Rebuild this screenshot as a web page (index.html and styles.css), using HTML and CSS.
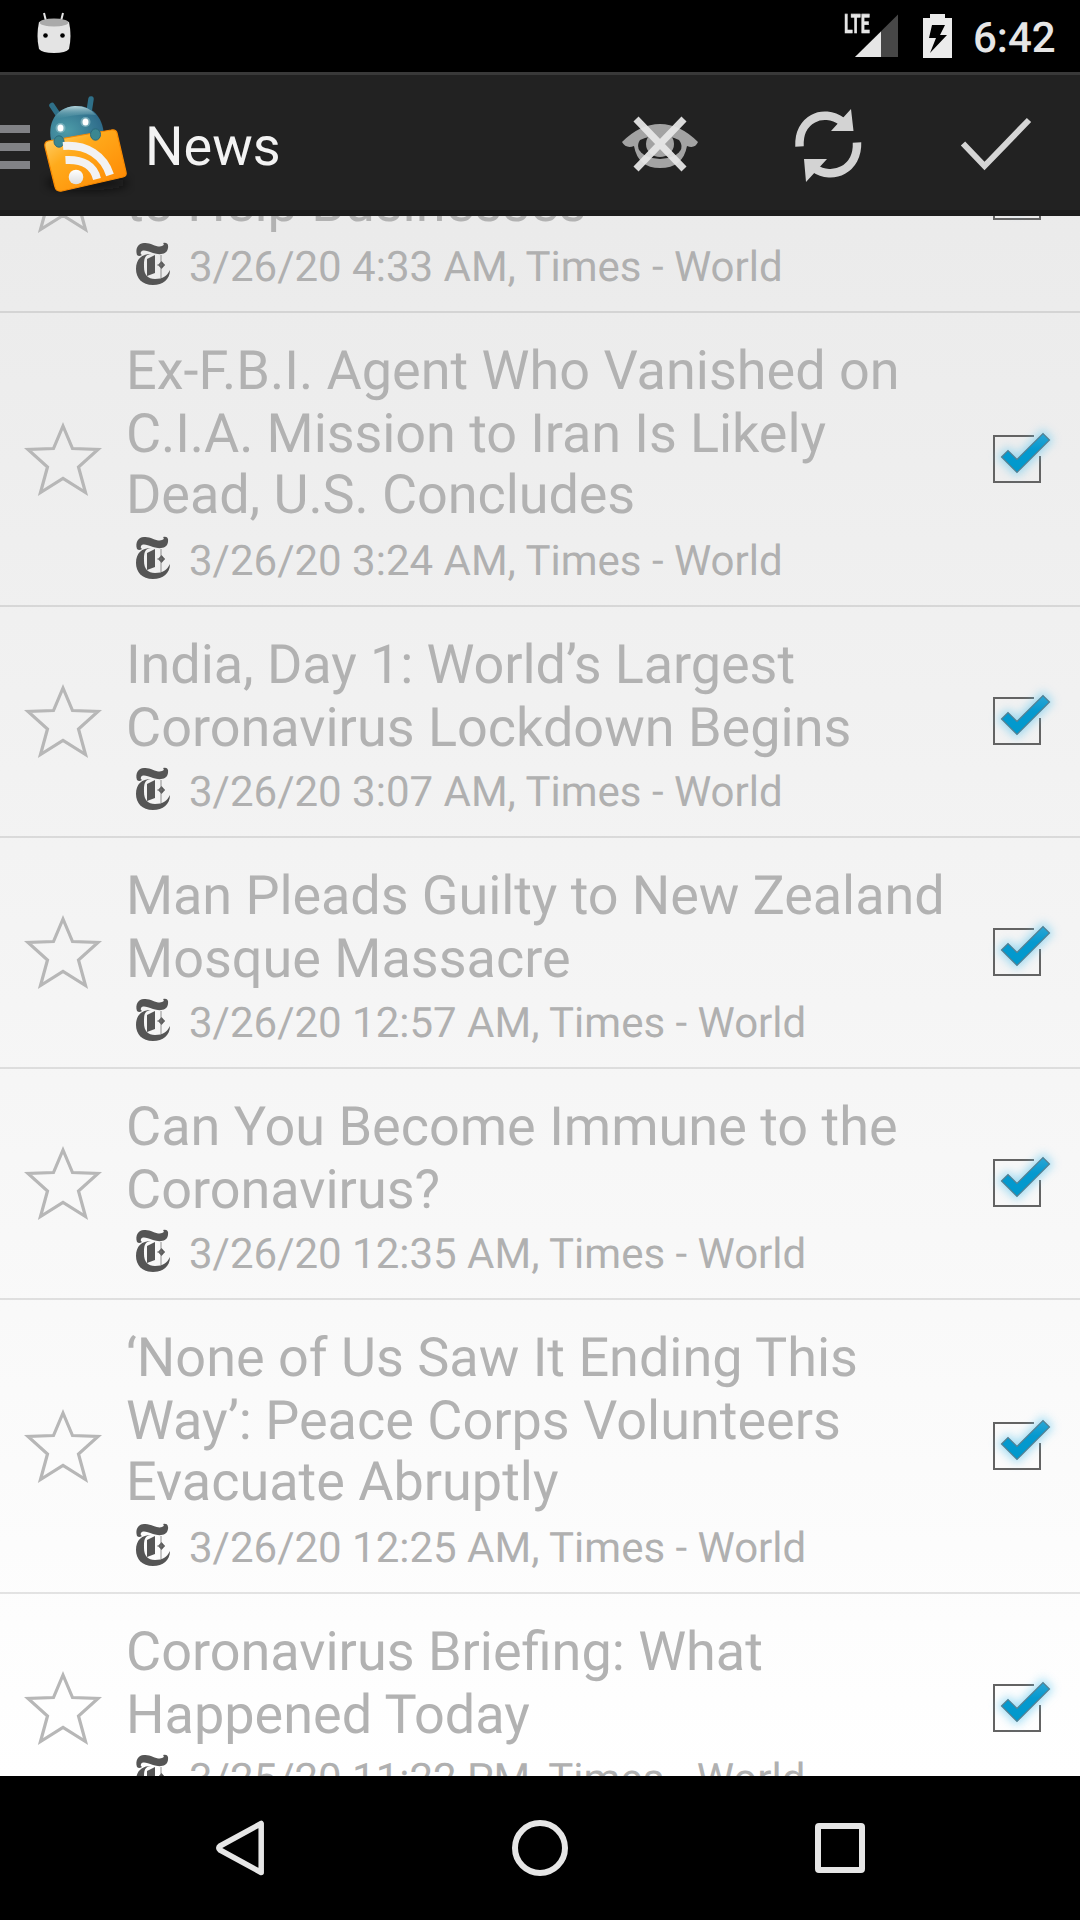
FILE: index.html
```html
<!DOCTYPE html>
<html lang="en">
<head>
<meta charset="utf-8">
<title>News</title>
<link rel="stylesheet" href="styles.css">
</head>
<body>
<svg class="defs" width="0" height="0" aria-hidden="true">
  <defs>
    <linearGradient id="tick" x1="0" y1="0" x2="0" y2="1"><stop offset="0" stop-color="#2ba5d4"/><stop offset=".4" stop-color="#0599cf"/><stop offset="1" stop-color="#0099cc"/></linearGradient>
    <filter id="glow" x="-50%" y="-50%" width="200%" height="200%"><feGaussianBlur stdDeviation="5"/></filter>
    <filter id="soft" x="-10%" y="-10%" width="120%" height="120%"><feGaussianBlur stdDeviation=".5"/></filter>
    <symbol id="star" viewBox="0 0 84 84"><path d="M42 9 51.500 31.500 77 32.500 57.500 50 64.500 75.500 42 61.500 19.500 75.500 26.500 50 7 32.500 32.500 31.500Z" transform="translate(0 -1)" fill="none" stroke="#b7b7b7" stroke-width="3.200" filter="url(#soft)"/></symbol>
    <symbol id="check" viewBox="0 0 96 96">
      <path d="M64 25H24V71H70V45" fill="none" stroke="#636363" stroke-width="2"/>
      <path d="M31 46 38 39.500 47 48 73 22 79.500 29 47 61.500Z" fill="#4db9e4" stroke="#6ccbf0" stroke-width="6" opacity=".6" filter="url(#glow)"/>
      <path d="M31.500 46 38 39.500 47 48.500 73 22.500 79.500 29 47 61.500Z" fill="url(#tick)" stroke="#547f91" stroke-width="1.200"/>
    </symbol>
    <symbol id="feed" viewBox="0 0 36 44">
      <path d="M2 13C0 7 3 1 9 1C15 0 22 6 27 4Q30 3 28 1Q34 0 33 6C32 13 24 13 18 11C12 9 8 7 6 10Q5 12 7 13Q4 15 2 13Z" fill="#555"/>
      <path d="M16 12C9 13 9 17 9 25C9 33 13 37 20 37C28 37 32 34 35 28C35 37 28 43 18 43C7 43 1 36 1 27C1 17 7 12 16 12Z" fill="#555"/>
      <path d="M12 17 20 13V31L12 34ZM23 23 26.500 19 30 23 26.500 27Z" fill="#555"/>
      <path d="M26 13V36M22 23H30" stroke="#777" stroke-width=".8" fill="none"/>
    </symbol>
  </defs>
</svg>
<div class="screen">
  <div class="status">
    <svg class="droid" width="36" height="42" viewBox="0 0 36 42"><path d="M8 1 10 9M27 1 25 9" stroke="#e4e4e4" stroke-width="2"/><path d="M3 10Q18 5 33 10Q36 24 33 37Q30 41 18 41Q6 41 3 37Q0 24 3 10Z" fill="#e4e4e4"/><ellipse cx="18" cy="10.500" rx="14.500" ry="4" fill="#aaa"/><circle cx="9.500" cy="23.500" r="2.300"/><circle cx="26.500" cy="23.500" r="2.300"/></svg>
    <div class="signal"><span class="lte">LTE</span><svg width="54" height="44" viewBox="0 0 54 44"><path d="M11 43 54 .5V43Z" fill="#474747"/><path d="M11 43 37 17.500V43Z" fill="#e6e6e6"/></svg></div>
    <svg class="battery" width="29" height="44" viewBox="0 0 29 44"><path d="M0 4H7V0H22V4H29V44H0Z" fill="#ebebeb"/><path d="M9 11H22L17 21H24L7 39 13 24H6Z"/></svg>
    <span class="clock">6:42</span>
  </div>
  <header class="bar">
    <div class="menu"><i></i><i></i><i></i></div>
    <svg class="logo" width="96" height="108" viewBox="0 0 96 108">
      <defs>
        <linearGradient id="card" x1="0" y1="0" x2="1" y2="1"><stop offset="0" stop-color="#ffd87a"/><stop offset=".35" stop-color="#ffab1c"/><stop offset="1" stop-color="#ff8500"/></linearGradient>
        <radialGradient id="head" cx=".3" cy=".6" r=".75"><stop offset="0" stop-color="#4d9ca8"/><stop offset="1" stop-color="#2b6687"/></radialGradient>
        <linearGradient id="shine" x1="0" y1="0" x2="0" y2="1"><stop offset="0" stop-color="#b8d4da"/><stop offset="1" stop-color="#4b94a2" stop-opacity="0"/></linearGradient>
        <linearGradient id="paper" x1="0" y1="0" x2="0" y2="1"><stop offset="0" stop-color="#fff"/><stop offset="1" stop-color="#dedede"/></linearGradient>
      </defs>
      <ellipse cx="48" cy="93" rx="41" ry="7" fill="#111" opacity=".7" filter="url(#glow)"/>
      <path d="M13 15.500 20 26M52 9 50 22" stroke="#2f7089" stroke-width="5.500" stroke-linecap="round"/>
      <path d="M14 57C7 38 13 18 36 16C55 15 65 29 65 48Z" fill="url(#head)"/>
      <path d="M14 30Q21 17 36 16Q50 16 57 25Q40 23 14 30Z" fill="url(#shine)"/>
      <path d="M10 52 73 41Q78 40 79 44L88 83Q89 87 85 88L24 102Q18 103 17 98L7 58Q6 53 10 52Z" transform="translate(-1 -1)" fill="url(#card)" stroke="#f88900" stroke-width="1.200"/>
      <circle cx="21.500" cy="38" r="5" fill="#98c4cd" opacity=".6"/><circle cx="46.500" cy="32" r="5" fill="#98c4cd" opacity=".6"/>
      <ellipse cx="21.500" cy="38" rx="3" ry="3.600" fill="#fff"/><ellipse cx="46.500" cy="32" rx="3" ry="3.600" fill="#fff"/>
      <g fill="#3b8791" stroke="#2b6a7d"><ellipse cx="20" cy="51.500" rx="5" ry="5.700"/><ellipse cx="56.500" cy="44.500" rx="5" ry="5.700"/></g>
      <circle cx="37" cy="87" r="7.300" fill="url(#paper)"/>
      <path d="M26.500 71C44 70 55 77 58 90M24 57C48 55 65 67 71 86" transform="translate(0 -1)" fill="none" stroke="#f2f2f2" stroke-width="8"/>
    </svg>
    <h1>News</h1>
    <div class="actions">
      <svg width="96" height="96" viewBox="0 0 96 96"><path d="M10 45Q28 27 48 27Q68 27 86 45Q83 52 75 49Q71 71 48 71Q26 71 22 49Q14 52 10 45Z" fill="#a3a3a3"/><path d="M28 43Q22 52 34 59Q48 65 62 59Q74 52 67 43Q48 34 28 43Z" fill="#222"/><ellipse cx="48" cy="47" rx="14" ry="13" fill="#a3a3a3"/><path d="M24 22 72 72M72 22 24 72" stroke="#e8e8e8" stroke-width="7" opacity=".93"/></svg>
      <svg width="96" height="96" viewBox="0 0 96 96"><path d="M19.500 49.500C18 22 43 11 62 24.500M77 45.500C78 72 53 84 34 71" fill="none" stroke="#d3d3d3" stroke-width="8.500"/><path d="M71 12 73.500 34H51ZM24 62H47L26 85Z" fill="#d3d3d3"/></svg>
      <svg width="96" height="96" viewBox="0 0 96 96"><path d="M15 46.500 36.500 69 81 23" fill="none" stroke="#d5d5d5" stroke-width="6"/></svg>
    </div>
  </header>
  <main class="list">
    <article class="row cut"><svg class="star"><use href="#star"/></svg><div class="text"><h2><span>to Help Businesses</span></h2><p><svg class="feed"><use href="#feed"/></svg>3/26/20 4:33 AM, Times - World</p></div><svg class="check"><use href="#check"/></svg></article>
    <article class="row"><svg class="star"><use href="#star"/></svg><div class="text"><h2><span>Ex-F.B.I. Agent Who Vanished on</span><span class="snug">C.I.A. Mission to Iran Is Likely</span><span class="snug">Dead, U.S. Concludes</span></h2><p><svg class="feed"><use href="#feed"/></svg>3/26/20 3:24 AM, Times - World</p></div><svg class="check"><use href="#check"/></svg></article>
    <article class="row"><svg class="star"><use href="#star"/></svg><div class="text"><h2><span class="snug">India, Day 1: World’s Largest</span><span>Coronavirus Lockdown Begins</span></h2><p><svg class="feed"><use href="#feed"/></svg>3/26/20 3:07 AM, Times - World</p></div><svg class="check"><use href="#check"/></svg></article>
    <article class="row"><svg class="star"><use href="#star"/></svg><div class="text"><h2><span class="snug">Man Pleads Guilty to New Zealand</span><span>Mosque Massacre</span></h2><p><svg class="feed"><use href="#feed"/></svg>3/26/20 12:57 AM, Times - World</p></div><svg class="check"><use href="#check"/></svg></article>
    <article class="row"><svg class="star"><use href="#star"/></svg><div class="text"><h2><span>Can You Become Immune to the</span><span>Coronavirus?</span></h2><p><svg class="feed"><use href="#feed"/></svg>3/26/20 12:35 AM, Times - World</p></div><svg class="check"><use href="#check"/></svg></article>
    <article class="row"><svg class="star"><use href="#star"/></svg><div class="text"><h2><span>‘None of Us Saw It Ending This</span><span>Way’: Peace Corps Volunteers</span><span>Evacuate Abruptly</span></h2><p><svg class="feed"><use href="#feed"/></svg>3/26/20 12:25 AM, Times - World</p></div><svg class="check"><use href="#check"/></svg></article>
    <article class="row"><svg class="star"><use href="#star"/></svg><div class="text"><h2><span>Coronavirus Briefing: What</span><span>Happened Today</span></h2><p><svg class="feed"><use href="#feed"/></svg>3/25/20 11:22 PM, Times - World</p></div><svg class="check"><use href="#check"/></svg></article>
  </main>
  <nav class="nav">
    <svg width="60" height="60" viewBox="0 0 60 60"><path d="M51.200 5.500V54.500L10 32Q7.500 30 10 28Z" fill="none" stroke="#e6e6e6" stroke-width="5.500" stroke-linejoin="round"/></svg>
    <svg width="60" height="60" viewBox="0 0 60 60"><circle cx="30" cy="30" r="25" fill="none" stroke="#e6e6e6" stroke-width="6"/></svg>
    <svg width="60" height="60" viewBox="0 0 60 60"><rect x="8" y="8" width="44" height="44" rx="1" fill="none" stroke="#e6e6e6" stroke-width="6"/></svg>
  </nav>
</div>
</body>
</html>
```
FILE: styles.css
```css
* { box-sizing: border-box; margin: 0; padding: 0; }
body { font-family: Roboto, sans-serif; background: #000; text-rendering: geometricPrecision; }
svg { display: block; flex: none; }
.defs { position: absolute; }
.screen { width: 1080px; height: 1920px; overflow: hidden; display: flex; flex-direction: column; }
.status { height: 72px; flex: none; display: flex; align-items: flex-start; background: #000; }
.droid { margin: 12px 0 0 36px; }
.signal { margin: 14px 25px 0 auto; width: 54px; position: relative; }
.lte { position: absolute; left: 0; top: 0; font-size: 26.500px; line-height: 22px; font-weight: 700; color: #e6e6e6; -webkit-text-stroke: .6px #e6e6e6; transform: scaleX(.6); transform-origin: left; }
.battery { margin: 14px 21px 0 0; }
.clock { width: 107px; font-size: 42px; line-height: 50px; padding-top: 14px; font-weight: 500; color: #e6e6e6; }
.bar { height: 144px; flex: none; display: flex; align-items: center; background: #222; border-top: 3px solid #393939; border-bottom: 6px solid #1b1b1b; }
.menu { width: 30px; display: flex; flex-direction: column; gap: 10px; margin-top: 8px; }
.menu i { height: 8px; background: #818286; }
.logo { margin: 2px 0 0 9px; }
.bar h1 { margin-left: 10px; font-size: 54px; font-weight: 400; line-height: 64px; color: #f3f3f3; padding-top: 10px; }
.actions { margin: 5px 36px 0 auto; display: flex; gap: 72px; }
.list { height: 1560px; flex: none; overflow: hidden; display: flex; flex-direction: column; background: linear-gradient(#e8e8e8 -216px, #fff 100%); }
.row { flex: none; display: flex; align-items: center; border-bottom: 2px solid rgba(0, 0, 0, .1); }
.row.cut { margin-top: -134px; }
.row.cut h2 { padding-top: 63px; }
.star { width: 84px; height: 84px; margin: 1px 21px 0; }
.text { flex: 1; padding: 27px 0 18px; white-space: nowrap; }
.text h2 { font-size: 54px; font-weight: 400; color: #b2b2b2; }
.text h2 span { display: block; line-height: 63px; }
.text h2 span:nth-child(3) { margin: -2px 0 2px; }
.text h2 .snug { letter-spacing: -.08px; }
.text p { display: flex; align-items: center; padding-top: 8px; font-size: 42px; line-height: 50px; color: #b0b0b0; }
.feed { width: 36px; height: 44px; margin: -8px 18px 0 9px; }
.check { width: 96px; height: 96px; margin: -1px 14px 0 0; }
.nav { height: 144px; flex: none; display: flex; justify-content: center; align-items: center; gap: 240px; background: #000; }
```
